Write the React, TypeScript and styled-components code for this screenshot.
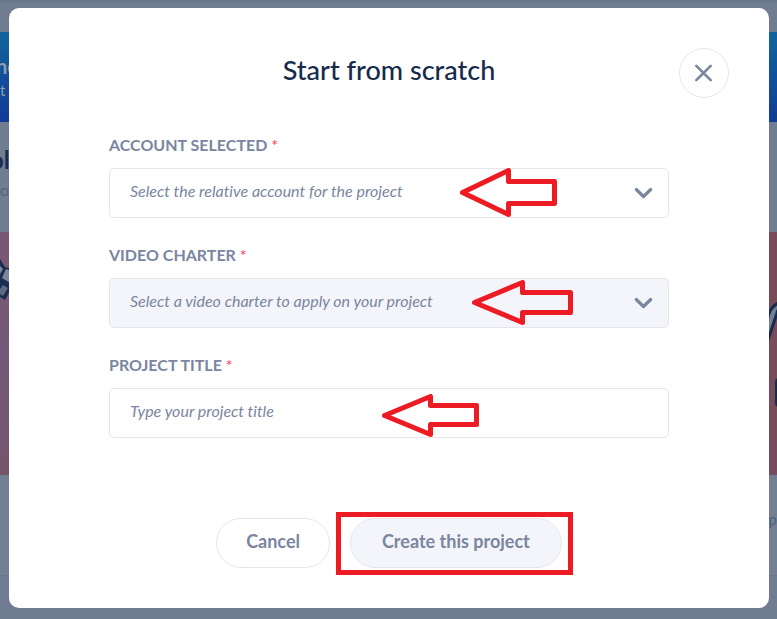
import React from 'react';
import styled, { createGlobalStyle } from 'styled-components';

const GlobalStyle = createGlobalStyle`
  *, *::before, *::after { box-sizing: border-box; }
  body {
    margin: 0;
    background: #6f7c91;
    font-family: Lato, 'Open Sans', sans-serif;
    font-variant-ligatures: none;
  }
  button, input, select { font-family: inherit; font-variant-ligatures: none; }
`;

const slate = '#7a859f';
const line = '#e5e6e9';
const red = '#ed1c24';

const Page = styled.div`
  position: relative;
  min-height: 100vh;
  overflow: hidden;
`;

const Backdrop = styled.div`
  position: absolute;
  inset: 0;
  overflow: hidden;
`;

const TopBar = styled.div`
  height: 32px;
  background: #707c8f;
  box-shadow: inset 0 2px 0 #69778a;
`;

const Banner = styled.div`
  height: 90px;
  padding-top: 20px;
  background: linear-gradient(#12659b, #133a98);
  color: #929cab;
`;

const BannerTitle = styled.div`
  text-indent: -4px;
  font-size: 20px;
  line-height: 28px;
  font-weight: 700;
`;

const BannerText = styled.div`
  font-size: 15px;
  line-height: 20px;
`;

const Intro = styled.div`
  height: 110px;
  padding-top: 22px;
  background: #707c90;
`;

const IntroTitle = styled.div`
  text-indent: -10px;
  font-size: 24px;
  line-height: 32px;
  font-weight: 700;
  color: #1a2d52;
`;

const IntroText = styled.div`
  font-size: 16px;
  line-height: 28px;
  color: #566582;
`;

const Cards = styled.div`
  display: grid;
  grid-template-columns: 1fr 1fr;
`;

const Card = styled.div`
  background: #738093;
  border-bottom: 1px solid #69778a;
`;

const Cover = styled.div<{ $tone: string; $end?: boolean }>`
  display: flex;
  justify-content: ${(p) => (p.$end ? 'flex-end' : 'flex-start')};
  height: 243px;
  background: ${(p) => p.$tone};
`;

const CardBody = styled.div`
  height: 100px;
  padding-top: 32px;
  text-align: right;
  font-size: 15px;
  line-height: 24px;
  color: #4f6080;
`;

const Overlay = styled.div`
  position: relative;
  display: flex;
  justify-content: center;
  padding: 8px 8px 11px 9px;
`;

const Dialog = styled.section`
  width: 100%;
  max-width: 960px;
  padding: 40px 40px;
  border-radius: 10px;
  background: #fff;
`;

const Header = styled.header`
  display: grid;
  grid-template-columns: 50px 1fr 50px;
`;

const Title = styled.h1`
  grid-column: 2;
  margin: 0;
  padding-top: 6px;
  text-align: center;
  font-size: 27px;
  line-height: 32px;
  font-weight: 500;
  color: #172b4d;
`;

const CloseButton = styled.button`
  display: grid;
  place-items: center;
  width: 50px;
  height: 50px;
  padding: 0;
  border: 1px solid ${line};
  border-radius: 50%;
  background: #fff;
  color: ${slate};
  cursor: pointer;
`;

const Form = styled.form`
  display: grid;
  gap: 28px;
  padding: 38px 60px 0;
`;

const Label = styled.label`
  display: block;
  padding-bottom: 14px;
  font-size: 16px;
  line-height: 18px;
  font-weight: 700;
  color: ${slate};
`;

const Required = styled.span`
  font-weight: 400;
  color: #ff3358;
`;

const Control = styled.div`
  position: relative;
`;

const fieldStyles = `
  display: block;
  width: 100%;
  height: 50px;
  margin: 0;
  padding: 0 50px 6px 20px;
  border: 1px solid ${line};
  border-radius: 5px;
  outline: none;
  font-size: 16px;
  font-style: italic;
  color: ${slate};
`;

const Select = styled.select<{ $muted?: boolean }>`
  ${fieldStyles}
  appearance: none;
  background: ${(p) => (p.$muted ? '#f4f5fa' : '#fff')};
`;

const TextInput = styled.input`
  ${fieldStyles}
  background: #fff;
  &::placeholder { color: ${slate}; opacity: 1; }
`;

const Chevron = styled.svg`
  position: absolute;
  right: 15px;
  top: 18px;
  pointer-events: none;
`;

const Pointer = styled.svg<{ $left: number; $top: number }>`
  position: absolute;
  left: ${(p) => p.$left}px;
  top: ${(p) => p.$top}px;
  pointer-events: none;
`;

const Actions = styled.div`
  display: flex;
  justify-content: center;
  gap: 20px;
  padding-top: 52px;
`;

const Highlight = styled.div`
  position: relative;
  &::after {
    content: '';
    position: absolute;
    inset: -6px -11px -7px -14px;
    border: 5px solid ${red};
    pointer-events: none;
  }
`;

const Button = styled.button<{ $muted?: boolean }>`
  height: 50px;
  padding: 0 ${(p) => (p.$muted ? 31 : 29)}px 4px;
  border: 1px solid ${line};
  border-radius: 25px;
  background: ${(p) => (p.$muted ? '#f4f5fa' : '#fff')};
  font-size: 18px;
  font-weight: 700;
  color: ${slate};
  cursor: pointer;
`;

type ArrowProps = { left: number; top: number; width: number; height: number; neck: number; shaft: [number, number] };

function Arrow({ left, top, width, height, neck, shaft }: ArrowProps) {
  const right = width - 2.5;
  const bottom = height - 2.5;
  return (
    <Pointer $left={left} $top={top} width={width} height={height} aria-hidden="true">
      <path
        d={`M2.5 ${height / 2}L${neck} 2.5V${shaft[0]}H${right}V${shaft[1]}H${neck}V${bottom}Z`}
        fill="none"
        stroke={red}
        strokeWidth="5"
        strokeLinejoin="round"
      />
    </Pointer>
  );
}

function Down() {
  return (
    <Chevron width="20" height="14" viewBox="0 0 20 14" aria-hidden="true">
      <path d="M2.3 3.5L9.5 10.5L16.7 3.5" fill="none" stroke={slate} strokeWidth="3.2" strokeLinecap="round" strokeLinejoin="round" />
    </Chevron>
  );
}

function PageBehind() {
  return (
    <Backdrop aria-hidden="true">
      <TopBar />
      <Banner>
        <BannerTitle>ne</BannerTitle>
        <BannerText>t</BannerText>
      </Banner>
      <Intro>
        <IntroTitle>ol</IntroTitle>
        <IntroText>o</IntroText>
      </Intro>
      <Cards>
        <Card>
          <Cover $tone="linear-gradient(#7a5872, #725a78 50%, #74566b)">
            <svg width="20" height="90">
              <path d="M0 27L5 35L12 37V55L5 68L0 65Z" fill="#1a2d50" />
              <path d="M6 37L12 39V52L2 46Z" fill="#7d879c" />
              <path d="M3 53L8 56L3 64L0 62V57Z" fill="#5d6b83" />
              <path d="M0 34L3 37L0 42Z" fill="#7d879c" />
            </svg>
          </Cover>
          <CardBody />
        </Card>
        <Card>
          <Cover $tone="linear-gradient(#784b58, #764d5c)" $end>
            <svg width="20" height="190">
              <path d="M20 70C11 78 11 92 11 106L20 82Z" fill="#718096" />
              <path d="M21 71C11 77 10 86 10 96M11 108L21 78" fill="none" stroke="#182b4e" strokeWidth="3" />
              <rect x="18" y="146" width="8" height="29" rx="4" fill="#182b4e" />
            </svg>
          </Cover>
          <CardBody>p</CardBody>
        </Card>
      </Cards>
    </Backdrop>
  );
}

export default function App() {
  return (
    <>
      <GlobalStyle />
      <Page>
        <PageBehind />
        <Overlay>
          <Dialog role="dialog" aria-modal="true" aria-labelledby="dialog-title">
            <Header>
              <Title id="dialog-title">Start from scratch</Title>
              <CloseButton type="button" aria-label="Close">
                <svg width="20" height="20" viewBox="0 0 20 20" aria-hidden="true">
                  <path d="M2.3 2.8L16.7 17.2M16.7 2.8L2.3 17.2" stroke="currentColor" strokeWidth="2.6" strokeLinecap="round" />
                </svg>
              </CloseButton>
            </Header>
            <Form onSubmit={(e) => e.preventDefault()}>
              <div>
                <Label htmlFor="account">ACCOUNT SELECTED <Required>*</Required></Label>
                <Control>
                  <Select id="account" defaultValue="">
                    <option value="">Select the relative account for the project</option>
                  </Select>
                  <Down />
                  <Arrow left={351} top={0} width={97} height={49} neck={48.5} shaft={[13.5, 35.5]} />
                </Control>
              </div>
              <div>
                <Label htmlFor="charter">VIDEO CHARTER <Required>*</Required></Label>
                <Control>
                  <Select id="charter" defaultValue="" $muted>
                    <option value="">Select a video charter to apply on your project</option>
                  </Select>
                  <Down />
                  <Arrow left={363} top={2} width={101} height={45} neck={50.5} shaft={[12.5, 32.5]} />
                </Control>
              </div>
              <div>
                <Label htmlFor="title">PROJECT TITLE <Required>*</Required></Label>
                <Control>
                  <TextInput id="title" placeholder="Type your project title" />
                  <Arrow left={273} top={6} width={97} height={43} neck={48.5} shaft={[11.5, 30.5]} />
                </Control>
              </div>
              <Actions>
                <Button type="button">Cancel</Button>
                <Highlight>
                  <Button type="submit" $muted>Create this project</Button>
                </Highlight>
              </Actions>
            </Form>
          </Dialog>
        </Overlay>
      </Page>
    </>
  );
}
